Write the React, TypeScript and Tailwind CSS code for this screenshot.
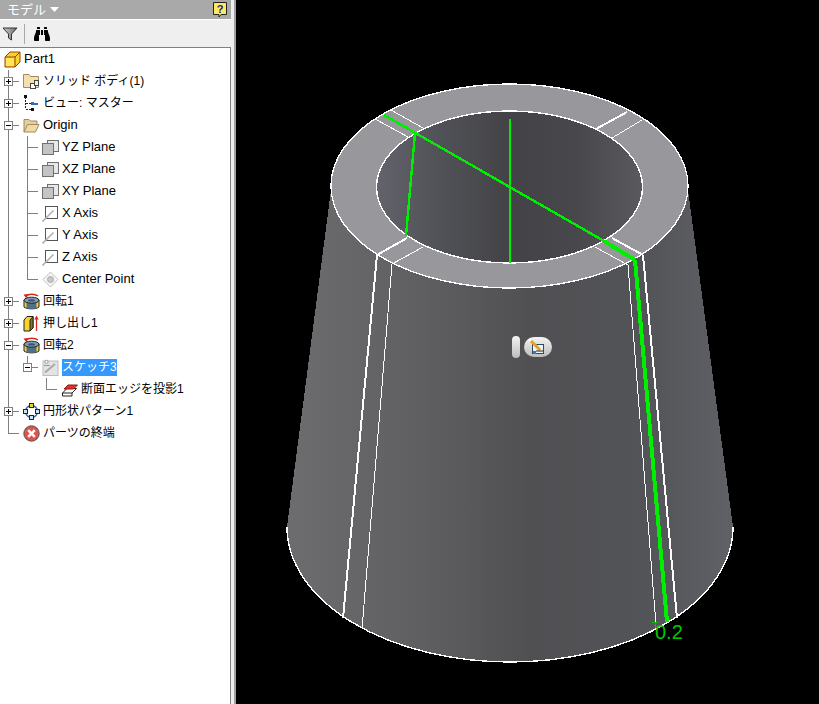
import { FaBinoculars } from 'react-icons/fa'

type Guide = 'none' | 'v' | 't' | 'l' | 'tplus' | 'tminus' | 'lminus'
type IconName =
  | 'part' | 'solids' | 'view' | 'origin' | 'plane' | 'axis' | 'point'
  | 'revolve' | 'extrude' | 'sketch' | 'project' | 'pattern' | 'end'

interface TreeRow {
  guides: Guide[]
  icon: IconName
  label: string
  selected?: boolean
}

const rows: TreeRow[] = [
  { guides: [], icon: 'part', label: 'Part1' },
  { guides: ['tplus'], icon: 'solids', label: 'ソリッド ボディ(1)' },
  { guides: ['tplus'], icon: 'view', label: 'ビュー: マスター' },
  { guides: ['tminus'], icon: 'origin', label: 'Origin' },
  { guides: ['v', 't'], icon: 'plane', label: 'YZ Plane' },
  { guides: ['v', 't'], icon: 'plane', label: 'XZ Plane' },
  { guides: ['v', 't'], icon: 'plane', label: 'XY Plane' },
  { guides: ['v', 't'], icon: 'axis', label: 'X Axis' },
  { guides: ['v', 't'], icon: 'axis', label: 'Y Axis' },
  { guides: ['v', 't'], icon: 'axis', label: 'Z Axis' },
  { guides: ['v', 'l'], icon: 'point', label: 'Center Point' },
  { guides: ['tplus'], icon: 'revolve', label: '回転1' },
  { guides: ['tplus'], icon: 'extrude', label: '押し出し1' },
  { guides: ['tminus'], icon: 'revolve', label: '回転2' },
  { guides: ['v', 'lminus'], icon: 'sketch', label: 'スケッチ3', selected: true },
  { guides: ['v', 'none', 'l'], icon: 'project', label: '断面エッジを投影1' },
  { guides: ['tplus'], icon: 'pattern', label: '円形状パターン1' },
  { guides: ['l'], icon: 'end', label: 'パーツの終端' },
]

const isLatin = (s: string) => /^[\x20-\x7e]+$/.test(s)

function GuideCell({ kind }: { kind: Guide }) {
  const hasBox = kind === 'tplus' || kind === 'tminus' || kind === 'lminus'
  const isLast = kind === 'l' || kind === 'lminus'
  return (
    <svg width="19" height="22" className="shrink-0" shapeRendering="crispEdges">
      {kind !== 'none' && (
        <path d={isLast ? 'M8.5 0V11.5' : 'M8.5 0V22'} stroke="#808080" fill="none" />
      )}
      {kind !== 'none' && kind !== 'v' && <path d="M8.5 11.5H19" stroke="#808080" fill="none" />}
      {hasBox && (
        <>
          <rect x="4.5" y="7.5" width="8" height="8" fill="#fff" stroke="#808080" />
          <path d="M6 11.5H11" stroke="#000" />
          {kind === 'tplus' && <path d="M8.5 9V14" stroke="#000" />}
        </>
      )}
    </svg>
  )
}

function TreeIcon({ name }: { name: IconName }) {
  switch (name) {
    case 'part':
      return (
        <svg width="17" height="17" viewBox="0 0 17 17">
          <path d="M1 6L6 1H16V11L11 16H1Z" fill="#f7d330" stroke="#a03a0a" />
          <path d="M2 7H10V15H2Z" fill="#ffe65a" />
          <path d="M1 6H11V16M11 6L16 1" fill="none" stroke="#a03a0a" />
        </svg>
      )
    case 'solids':
      return (
        <svg width="17" height="17" viewBox="0 0 17 17">
          <path d="M0.5 1.5H6L7.5 3.5H15.5V14.5H0.5Z" fill="#f3dfb0" stroke="#a08a60" />
          <rect x="7.5" y="10.5" width="5" height="5" fill="#fff" stroke="#444" />
          <rect x="11.5" y="7.5" width="4" height="5" fill="#eee" stroke="#444" />
        </svg>
      )
    case 'view':
      return (
        <svg width="17" height="17" viewBox="0 0 17 17" shapeRendering="crispEdges">
          <path d="M2.5 2V14H8M2.5 8H8" fill="none" stroke="#222" strokeDasharray="2 1" />
          <rect x="1" y="0" width="3" height="3" fill="#111" />
          <rect x="8" y="7" width="3" height="3" fill="#2f6fb0" />
          <rect x="11" y="8" width="4" height="2" fill="#2f6fb0" />
          <rect x="8" y="13" width="3" height="3" fill="#111" />
        </svg>
      )
    case 'origin':
      return (
        <svg width="17" height="17" viewBox="0 0 17 17">
          <path d="M1 2.5H6L7.5 4H14V8H5L1 15Z" fill="#e6cf9c" stroke="#a08a60" />
          <path d="M1 15L4.5 7.5H16L12.5 15Z" fill="#f0d9a5" stroke="#a08a60" />
        </svg>
      )
    case 'plane':
      return (
        <svg width="17" height="17" viewBox="0 0 17 17" shapeRendering="crispEdges">
          <rect x="5.5" y="1.5" width="11" height="11" fill="#e8e8e8" stroke="#707070" />
          <rect x="0.5" y="4.5" width="11" height="11" fill="#c4c4c4" stroke="#707070" />
        </svg>
      )
    case 'axis':
      return (
        <svg width="17" height="17" viewBox="0 0 17 17">
          <rect x="3.5" y="1.5" width="12" height="12" fill="#fff" stroke="#555" shapeRendering="crispEdges" />
          <path d="M0.5 16.5L11.5 5.5" stroke="#b0b0b0" strokeWidth="1.6" />
        </svg>
      )
    case 'point':
      return (
        <svg width="17" height="17" viewBox="0 0 17 17">
          <path d="M8.5 1L16 8.5L8.5 16L1 8.5Z" fill="#f6f6f6" stroke="#c0c0c0" />
          <circle cx="8.5" cy="8.5" r="3" fill="#c8c8c8" stroke="#aaa" />
        </svg>
      )
    case 'revolve':
      return (
        <svg width="17" height="17" viewBox="0 0 17 17">
          <path d="M1 7V14C4 16.5 13 16.5 16 14V7Z" fill="#f2d23c" stroke="#222" />
          <path d="M3.5 9V15.2C6 16 11 16 13.5 15.2V9Z" fill="#4f6f8a" />
          <ellipse cx="8.5" cy="7.2" rx="7.5" ry="3" fill="#7d9db5" stroke="#222" />
          <ellipse cx="8.5" cy="7.4" rx="3.5" ry="1.2" fill="#39556c" />
          <path d="M3 3C5.5 0.6 12 0.6 15 3" fill="none" stroke="#d62a1c" strokeWidth="1.5" />
          <path d="M0.5 1.5L5.5 1L3.4 5.5Z" fill="#d62a1c" />
        </svg>
      )
    case 'extrude':
      return (
        <svg width="17" height="17" viewBox="0 0 17 17">
          <path d="M1 5L4 1.5H10V13L7 16H1Z" fill="#f7d330" stroke="#222" />
          <path d="M7 5V16L10 13V1.5Z" fill="#8a7620" stroke="#222" />
          <path d="M13.5 16V3" stroke="#d62a1c" strokeWidth="1.3" />
          <path d="M13.5 0.5L15.7 4.5H11.3Z" fill="#d62a1c" />
        </svg>
      )
    case 'sketch':
      return (
        <svg width="17" height="17" viewBox="0 0 17 17">
          <rect x="1" y="2" width="15" height="14.5" fill="#e3e3e3" stroke="#bdbdbd" />
          <path d="M3 13.5L13 5" stroke="#a9a9a9" strokeWidth="2" />
          <circle cx="4.5" cy="2.8" r="1.6" fill="#fff" stroke="#999" />
          <path d="M2 6.5H8" stroke="#999" />
        </svg>
      )
    case 'project':
      return (
        <svg width="17" height="17" viewBox="0 0 17 17">
          <path d="M1.5 12L6 7.5H15.5L11 12V15H1.5Z" fill="#fff" stroke="#222" />
          <path d="M3 8L7 4H16.5L12.5 8Z" fill="#e0352a" stroke="#8a1a12" />
          <path d="M1.5 12H11" stroke="#222" />
        </svg>
      )
    case 'pattern':
      return (
        <svg width="17" height="17" viewBox="0 0 17 17">
          <circle cx="8.5" cy="8.5" r="6" fill="none" stroke="#2f5f8f" strokeWidth="1.4" />
          <rect x="6.5" y="0.5" width="4" height="4" fill="#f5d327" stroke="#222" />
          <rect x="0.5" y="6.5" width="4" height="4" fill="#cfe2f5" stroke="#222" />
          <rect x="12.5" y="6.5" width="4" height="4" fill="#cfe2f5" stroke="#222" />
          <rect x="6.5" y="12.5" width="4" height="4" fill="#cfe2f5" stroke="#222" />
        </svg>
      )
    case 'end':
      return (
        <svg width="17" height="17" viewBox="0 0 17 17">
          <circle cx="8.5" cy="8.5" r="7.7" fill="#e0524a" stroke="#555" />
          <path d="M5.2 5.2L11.8 11.8M11.8 5.2L5.2 11.8" stroke="#fff" strokeWidth="2.6" />
        </svg>
      )
  }
}

function ModelTree() {
  return (
    <div className="flex-1 min-h-0 overflow-hidden bg-white border-t border-r border-[#808080] font-['Liberation_Sans','Noto_Sans_CJK_JP',sans-serif] text-black">
      {rows.map((row, i) => (
        <div key={i} className="flex items-center h-[22px] whitespace-nowrap">
          {row.guides.map((g, j) => (
            <GuideCell key={j} kind={g} />
          ))}
          <span className="ml-[4px] mr-[3px] flex w-[17px] shrink-0 items-center">
            <TreeIcon name={row.icon} />
          </span>
          <span
            className={`${isLatin(row.label) ? 'text-[13px]' : 'text-[12px]'} ${
              row.selected ? 'bg-[#3399ff] text-white h-[17px] leading-[17px]' : ''
            }`}
          >
            {row.label}
          </span>
        </div>
      ))}
    </div>
  )
}

function Sidebar() {
  return (
    <aside className="flex h-full w-[236px] shrink-0 flex-col border-r-2 border-[#a0a0a0] bg-[#efefef] pr-[3px]">
      <div className="flex h-[19px] items-center justify-between bg-[#a9a9a9] pl-[7px] pr-[4px] font-['Liberation_Sans','Noto_Sans_CJK_JP',sans-serif] text-[13px] text-white">
        <span className="flex items-center gap-[4px]">
          モデル
          <svg width="9" height="5" viewBox="0 0 9 5">
            <path d="M0 0H9L4.5 5Z" fill="#fff" />
          </svg>
        </span>
        <svg width="14" height="16" viewBox="0 0 14 16" className="mt-[1px]">
          <path d="M0.5 0.5H13.5V12.5H8L6 15V12.5H0.5Z" fill="#ffe95c" stroke="#222" />
          <text x="7" y="11" textAnchor="middle" fontSize="11" fontWeight="700" fill="#1a1a8a" fontFamily="Liberation Sans">?</text>
        </svg>
      </div>
      <div className="h-px bg-white" />
      <div className="flex h-[27px] items-center">
        <svg width="16" height="14" viewBox="0 0 16 14" className="ml-[2px]">
          <defs>
            <linearGradient id="funnel" x1="0" x2="1" y1="0" y2="0">
              <stop offset="0" stopColor="#d0d0d0" />
              <stop offset="1" stopColor="#6a6a6a" />
            </linearGradient>
          </defs>
          <path d="M1 1H15L9.5 7V13L6.5 11V7Z" fill="url(#funnel)" stroke="#333" />
        </svg>
        <div className="ml-[6px] h-[20px] w-px bg-[#a8a8a8]" />
        <FaBinoculars className="ml-[9px] text-[16px] text-black" />
      </div>
      <ModelTree />
    </aside>
  )
}

// [path, stroke width]
const WHITE_LINES: [string, number][] = [
  // slits across the ring
  ['M391 110L423 128', 1],
  ['M375 119L410 138', 1],
  ['M627 112L596 129', 2],
  ['M642 120L612 138', 1],
  ['M407 238L377 255', 2],
  ['M423 247L392 264', 1],
  ['M612 238L643 255', 2],
  ['M595 247L628 265', 1],
  // slits down the wall
  ['M377 255L343 618', 2],
  ['M392 264L362 629', 1],
  ['M628 265L656 625', 1],
  ['M643 255L677 618', 2],
]

function CadView() {
  return (
    <main className="h-full flex-1 bg-black">
      <svg viewBox="236 0 583 704" className="block h-full w-full">
        <defs>
          <linearGradient id="wall" gradientUnits="userSpaceOnUse" x1="287" x2="733" y1="0" y2="0">
            <stop offset="0" stopColor="#6d6d70" />
            <stop offset="0.3" stopColor="#5f5f62" />
            <stop offset="0.55" stopColor="#505053" />
            <stop offset="0.8" stopColor="#535458" />
            <stop offset="1" stopColor="#606166" />
          </linearGradient>
          <linearGradient id="hole" gradientUnits="userSpaceOnUse" x1="377" x2="642" y1="0" y2="0">
            <stop offset="0" stopColor="#62636b" />
            <stop offset="0.25" stopColor="#505156" />
            <stop offset="0.5" stopColor="#434347" />
            <stop offset="0.75" stopColor="#48484c" />
            <stop offset="1" stopColor="#5a5a5e" />
          </linearGradient>
          <linearGradient id="pill" x1="0" x2="0" y1="0" y2="1">
            <stop offset="0" stopColor="#f4f4f4" />
            <stop offset="1" stopColor="#bdbdbd" />
          </linearGradient>
        </defs>

        <g shapeRendering="crispEdges">
          <path d="M331 190L287 527A223 135 0 0 0 733 527L688 190Z" fill="url(#wall)" />
          <path d="M287 527A223 135 0 0 0 733 527" fill="none" stroke="#fff" strokeWidth="1.4" />
          <ellipse cx="509.5" cy="186" rx="178.5" ry="102" fill="#98989c" stroke="#fff" strokeWidth="1.4" />
          <ellipse cx="509.5" cy="187" rx="133" ry="76" fill="url(#hole)" stroke="#fff" strokeWidth="1.4" />

          {WHITE_LINES.map(([d, w]) => (
            <path key={d} d={d} stroke="#fff" strokeWidth={w} fill="none" />
          ))}

          <g stroke="#00ee00" fill="none">
            <path d="M510 119V263" strokeWidth="2" />
            <path d="M415 133L406 236" strokeWidth="2.4" />
            <path d="M384 115L604 241" strokeWidth="2.4" />
            <path d="M604 241L635 260" strokeWidth="4" />
            <path d="M635 260L667 622" strokeWidth="4" />
          </g>
          <path d="M652 622H658M655 622V628" stroke="#00c800" fill="none" />
        </g>
        <text x="655" y="639" fontSize="20" fill="#00c800" fontFamily="Liberation Sans">0.2</text>

        {/* in-canvas sketch glyph */}
        <rect x="512" y="336" width="8" height="22" rx="4" fill="url(#pill)" />
        <rect x="524" y="337" width="28" height="20" rx="10" fill="url(#pill)" />
        <rect x="532.5" y="344.5" width="11" height="9" fill="#eef3fa" stroke="#2a4a70" />
        <path d="M530 340L540 350" stroke="#e8a020" strokeWidth="3" />
        <path d="M529 339L531 341" stroke="#fff" strokeWidth="3" />
        <path d="M536 351H543" stroke="#222" />
        <rect x="533" y="351" width="3" height="3" fill="#2a7fd0" />
      </svg>
    </main>
  )
}

export default function App() {
  return (
    <div className="flex h-[704px] w-[819px] overflow-hidden">
      <Sidebar />
      <CadView />
    </div>
  )
}
